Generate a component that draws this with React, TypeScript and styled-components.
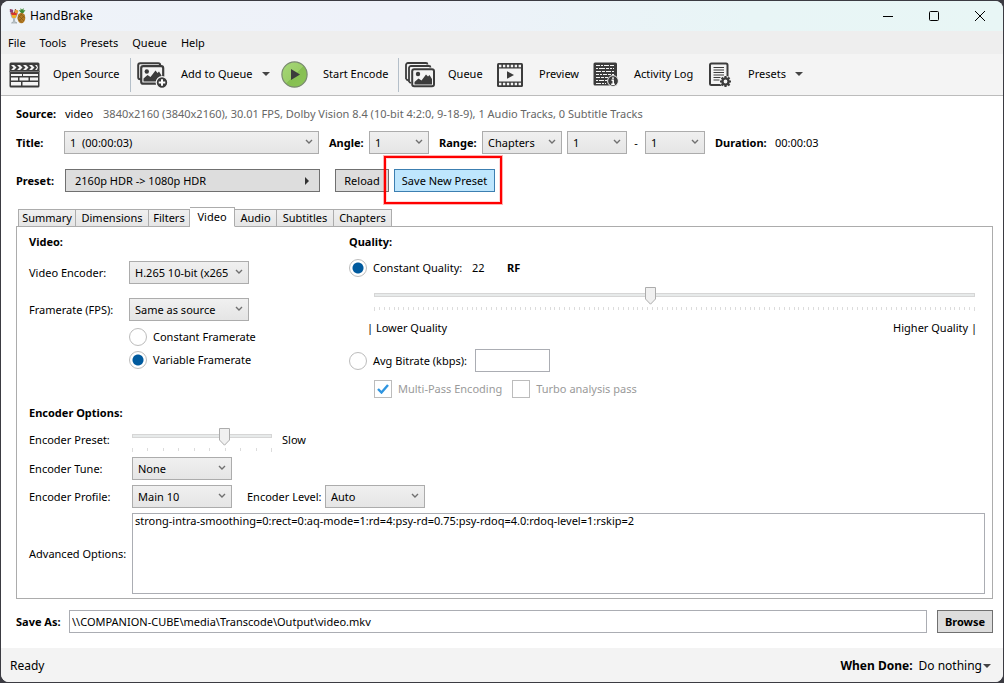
import React from "react";
import styled, { createGlobalStyle, css } from "styled-components";

const GlobalStyle = createGlobalStyle`
  *, *::before, *::after { box-sizing: border-box; }
  html, body { margin: 0; background: #3b3b42; }
  body, button, input, select, textarea {
    font-family: "Noto Sans", "Open Sans", sans-serif;
    font-size: 11px;
    line-height: 16px;
    color: #000;
  }
`;

const Window = styled.div`
  display: flex;
  flex-direction: column;
  min-height: calc(100vh - 2px);
  margin: 1px;
  border-radius: 8px;
  overflow: hidden;
  background: #fff;
`;

const TitleBar = styled.header`
  display: flex;
  align-items: center;
  height: 30px;
  padding-left: 8px;
  background: linear-gradient(90deg, #eef3f8, #eef1f9 40%, #e8f5f6 75%, #e8f6f5);
`;

const AppName = styled.h1`
  flex: 1;
  margin: 0 0 0 4px;
  font-size: 12px;
  font-weight: 400;
`;

const WindowButton = styled.button`
  display: grid;
  place-items: center;
  width: 46px;
  height: 30px;
  padding: 0;
  border: 0;
  background: none;
`;

const MenuBar = styled.nav`
  display: flex;
  align-items: center;
  gap: 14px;
  height: 23px;
  padding: 0 7px;
  background: #eee;
`;

const MenuButton = styled.button`
  padding: 0;
  border: 0;
  background: none;
`;

const Toolbar = styled.div`
  display: flex;
  align-items: center;
  height: 42px;
  padding-left: 8px;
  border-bottom: 1px solid #bcbcbc;
  background: #f4f4f4;
`;

const ToolButton = styled.button<{ $width: number; $gap: number }>`
  display: flex;
  align-items: center;
  gap: ${(p) => p.$gap}px;
  width: ${(p) => p.$width}px;
  height: 38px;
  padding: 0;
  border: 0;
  background: none;
  white-space: nowrap;
  svg { flex: none; }
`;

const ToolText = styled.span`
  display: flex;
  align-items: center;
  gap: 9px;
  padding-bottom: 2px;
`;

const Separator = styled.span`
  width: 1px;
  height: 34px;
  margin-right: 6px;
  background: #b4bfc9;
`;

const Caret = styled.span`
  border: 4px solid transparent;
  border-top-color: #444;
  border-bottom: 0;
`;

const Content = styled.main`
  display: flex;
  flex: 1;
  flex-direction: column;
  padding: 8px 10px 15px 15px;
`;

const SourceRow = styled.div`
  display: flex;
  align-items: center;
  height: 20px;
  margin-bottom: 7px;
  white-space: nowrap;
`;

const FormRow = styled.div`
  display: flex;
  align-items: center;
  margin-bottom: 15px;
`;

const Label = styled.label<{ $width?: number; $bold?: boolean }>`
  flex: none;
  width: ${(p) => (p.$width ? `${p.$width}px` : "auto")};
  font-weight: ${(p) => (p.$bold ? 700 : 400)};
  white-space: nowrap;
`;

const Muted = styled.span`
  margin-left: 10px;
  color: #666;
`;

const Dash = styled.span`
  width: 18px;
  text-align: center;
`;

const SelectFrame = styled.span<{ $width: number; $after?: number }>`
  display: grid;
  flex: none;
  align-items: center;
  width: ${(p) => p.$width}px;
  height: 23px;
  margin-right: ${(p) => p.$after ?? 0}px;
  border: 1px solid #acacac;
  background: linear-gradient(#f0f0f0, #e5e5e5);
  > * { grid-area: 1 / 1; }
  svg {
    justify-self: end;
    margin: 0 5px 2px 0;
    pointer-events: none;
  }
`;

const NativeSelect = styled.select`
  width: 100%;
  height: 21px;
  padding: 0 20px 0 5px;
  border: 0;
  appearance: none;
  background: none;
  overflow: hidden;
  text-overflow: clip;
`;

const Button = styled.button<{ $width: number; $accent?: boolean }>`
  flex: none;
  width: ${(p) => p.$width}px;
  height: 23px;
  padding: 0;
  border: 1px solid ${(p) => (p.$accent ? "#3c7fb1" : "#707070")};
  background: ${(p) => (p.$accent ? "#bee6fd" : "#ddd")};
  white-space: nowrap;
`;

const PresetButton = styled(Button)`
  display: flex;
  align-items: center;
  justify-content: space-between;
  margin-right: 15px;
  padding: 0 10px 0 9px;
`;

const Highlight = styled.span`
  position: relative;
  display: flex;
  margin-left: 5px;
  &::after {
    content: "";
    position: absolute;
    inset: -13px -7px -12px -10px;
    border: 2px solid #f00;
    box-shadow: 0 0 0 1px rgba(255, 0, 0, 0.3), inset 0 0 0 1px rgba(255, 0, 0, 0.15);
    pointer-events: none;
  }
`;

const Tabs = styled.div`
  display: flex;
  align-items: flex-end;
  height: 20px;
  margin-bottom: -1px;
  padding-left: 2px;
  z-index: 1;
`;

const Tab = styled.button<{ $width: number; $active?: boolean }>`
  width: ${(p) => p.$width}px;
  height: 18px;
  padding: 0;
  border: 1px solid #acacac;
  border-left-width: 0;
  background: linear-gradient(#f0f0f0, #e5e5e5);
  &:first-child { border-left-width: 1px; }
  ${(p) =>
    p.$active &&
    css`
      height: 20px;
      border-bottom-color: #fff;
      background: #fff;
    `}
`;

const Panel = styled.section`
  display: flex;
  flex: 1;
  flex-direction: column;
  margin-bottom: 11px;
  padding: 7px 7px 4px 12px;
  border: 1px solid #acacac;
`;

const Columns = styled.div`
  display: grid;
  grid-template-columns: 320px 1fr;
`;

const Heading = styled.h2`
  height: 16px;
  margin: 0;
  font-size: 11px;
  line-height: 16px;
`;

const Line = styled.div<{ $height: number; $top?: number; $indent?: number }>`
  display: flex;
  align-items: center;
  height: ${(p) => p.$height}px;
  margin-top: ${(p) => p.$top ?? 0}px;
  padding-left: ${(p) => p.$indent ?? 0}px;
`;

const Radio = styled.input`
  flex: none;
  width: 18px;
  height: 18px;
  margin: 0 6px 0 0;
  border: 1px solid #bcbcbc;
  border-radius: 50%;
  appearance: none;
  background: #fff;
  &:checked { background: radial-gradient(circle, #005a9e 5px, #fff 6px); }
`;

const CheckFrame = styled.span`
  display: grid;
  place-items: center;
  width: 18px;
  height: 18px;
  margin-right: 6px;
  > * { grid-area: 1 / 1; }
  svg { pointer-events: none; }
`;

const Checkbox = styled.input`
  width: 18px;
  height: 18px;
  margin: 0;
  border: 1px solid #bcbcbc;
  appearance: none;
  background: #fff;
`;

const DisabledLabel = styled(Label)`
  margin-right: 10px;
  color: #9a9a9a;
`;

const SliderFrame = styled.div<{ $width?: number }>`
  display: flex;
  flex: ${(p) => (p.$width ? "none" : "1")};
  flex-direction: column;
  width: ${(p) => (p.$width ? `${p.$width}px` : "auto")};
  margin-right: 10px;
  svg { display: block; margin-top: 4px; }
`;

const thumb = `url("data:image/svg+xml,%3Csvg xmlns='http://www.w3.org/2000/svg' width='11' height='18'%3E%3Cpath d='M.5.5h10v11.5l-5 5.2l-5-5.2z' fill='%23f0f0f0' stroke='%23acacac'/%3E%3C/svg%3E")`;

const Slider = styled.input`
  width: 100%;
  height: 16px;
  margin: 0;
  appearance: none;
  background: none;
  &::-webkit-slider-runnable-track {
    height: 4px;
    border: 1px solid #d6d6d6;
    background: #e7eaea;
  }
  &::-webkit-slider-thumb {
    width: 11px;
    height: 18px;
    margin-top: -7px;
    appearance: none;
    background: ${thumb} no-repeat;
  }
`;

const Ends = styled.div`
  display: flex;
  justify-content: space-between;
  margin: 9px 0 0 18px;
  padding-right: 8px;
`;

const TextInput = styled.input<{ $width?: number }>`
  flex: ${(p) => (p.$width ? "none" : "1")};
  width: ${(p) => (p.$width ? `${p.$width}px` : "auto")};
  min-width: 0;
  height: 23px;
  padding: 0 2px;
  border: 1px solid #abadb3;
  background: #fff;
`;

const AdvancedRow = styled.div`
  display: flex;
  flex: 1;
  align-items: center;
  margin-top: 5px;
`;

const TextArea = styled.textarea`
  flex: 1;
  align-self: stretch;
  min-width: 0;
  min-height: 60px;
  padding: 0 2px;
  border: 1px solid #abadb3;
  line-height: 14px;
  resize: none;
`;

const SaveRow = styled.div`
  display: flex;
  align-items: center;
`;

const BrowseButton = styled(Button)`
  margin-left: 10px;
  font-weight: 700;
`;

const StatusBar = styled.footer`
  display: flex;
  align-items: center;
  height: 34px;
  padding: 2px 12px 0 9px;
  background: #f3f3f3;
  font-size: 12px;
`;

const Status = styled.span`
  flex: 1;
`;

const WhenDone = styled.button`
  display: flex;
  align-items: center;
  gap: 1px;
  margin-left: 6px;
  padding: 0;
  border: 0;
  background: none;
  font-size: 12px;
`;

interface SelectProps {
  id?: string;
  label?: string;
  value: string;
  width: number;
  after?: number;
}

function Select({ id, label, value, width, after }: SelectProps) {
  return (
    <SelectFrame $width={width} $after={after}>
      <NativeSelect id={id} aria-label={label}>
        <option>{value}</option>
      </NativeSelect>
      <svg width="8" height="6" viewBox="0 0 8 6">
        <path d="M1 1l3 3l3-3" fill="none" stroke="#707070" strokeWidth="1.4" />
      </svg>
    </SelectFrame>
  );
}

function Ticks({ count, width }: { count: number; width: number }) {
  const step = (width - 1) / count;
  return (
    <svg width="100%" height="4" viewBox={`0 0 ${width} 4`} preserveAspectRatio="none" shapeRendering="crispEdges">
      {Array.from({ length: count + 1 }, (_, i) => (
        <rect key={i} x={Math.round(i * step)} width="1" height={i === 0 || i === count ? 4 : 3} fill="#dcdcdc" />
      ))}
    </svg>
  );
}

function AppIcon() {
  return (
    <svg width="17" height="16" viewBox="0 0 17 16">
      <path d="M1.500 5h7L7 9.500L5.600 10.500v3L8 15H2.500l2-1.500v-3L2.800 9.500z" fill="#c9d3d8" stroke="#8c9498" strokeWidth=".6" />
      <path d="M1.500 4.500h7L7.200 8H3z" fill="#d8352a" />
      <path d="M2.600 7h5L6.500 10h-3z" fill="#eeb02c" />
      <path d="M1 1l2.500 4M6.500 1L5.500 5" stroke="#8a4a2c" strokeWidth="1" />
      <circle cx="2.500" cy="3" r="1.800" fill="#8e3f78" />
      <circle cx="7.500" cy="3.600" r="1.800" fill="#e8a23a" />
      <path d="M12.500 5.500L9.500 2l2 .6L11.600 0l1.400 1.800L14.600 0l-.1 2.500L16.500 2l-2.500 3.500z" fill="#3f8a35" />
      <ellipse cx="12.400" cy="10" rx="3.900" ry="5.200" fill="#b27a24" />
      <path d="M9.500 7.500l5.500 5.500M9 10.500l4 4M11.500 5.800l4.200 4.200M15.500 7.500L10 13M13.200 5.600L8.800 10" stroke="#7e5213" strokeWidth=".6" />
    </svg>
  );
}

function SourceIcon() {
  return (
    <svg width="31" height="26" viewBox="0 0 31 26">
      <rect x=".5" y=".5" width="30" height="25" rx="1.500" fill="#3c3c3c" />
      <path d="M2 3h3l2.500 2.500L5 8H2l2.500-2.500zM8 3h3l2.500 2.500L11 8H8l2.500-2.500zM14 3h3l2.500 2.500L17 8h-3l2.500-2.500zM20 3h3l2.500 2.500L23 8h-3l2.500-2.500zM26 3h2l1 2.500L28 8h-2l2-2.500z" fill="#f4f4f4" />
      <path d="M0 9.500h31" stroke="#777" />
      <path d="M2 12h11v2H2zM14 12h15v2H14zM2 15.500h7v3H2zM10.500 15.500h9v3h-9zM21 15.500h8v3h-8zM2 20h10v3.500H2zM13.500 20H29v3.500H13.500z" fill="#f4f4f4" />
    </svg>
  );
}

function AddQueueIcon() {
  return (
    <svg width="31" height="26" viewBox="0 0 31 26">
      <rect x="1.200" y="1.200" width="22" height="16" rx="2" fill="none" stroke="#3c3c3c" strokeWidth="2" />
      <rect x="4.200" y="4.200" width="22" height="17.500" rx="2" fill="#f4f4f4" stroke="#3c3c3c" strokeWidth="2.200" />
      <circle cx="9.800" cy="9.500" r="2.200" fill="#3c3c3c" />
      <path d="M6.500 19.500v-3l4-3.500l3 2l5-6.500l2 2.500l1.500-1.500l2.500 4v6z" fill="#3c3c3c" />
      <circle cx="25" cy="20.500" r="5.800" fill="#3c3c3c" stroke="#f4f4f4" strokeWidth="1.200" />
      <path d="M25 17.200v6.600M21.700 20.500h6.600" stroke="#fff" strokeWidth="2" />
    </svg>
  );
}

function StartIcon() {
  return (
    <svg width="27" height="27" viewBox="0 0 27 27">
      <defs>
        <linearGradient id="green" x1="0" y1="0" x2="1" y2="1">
          <stop offset="0" stopColor="#a6d878" />
          <stop offset=".5" stopColor="#9acd68" />
          <stop offset=".52" stopColor="#86bf52" />
          <stop offset="1" stopColor="#8cc456" />
        </linearGradient>
      </defs>
      <circle cx="13.500" cy="13.500" r="12.600" fill="url(#green)" stroke="#7a8a70" strokeWidth="1.200" />
      <path d="M10 8l9 5.500l-9 5.500z" fill="#3c3c3c" />
    </svg>
  );
}

function QueueIcon() {
  return (
    <svg width="30" height="26" viewBox="0 0 30 26">
      <path d="M1 17V3a2 2 0 0 1 2-2h18a1.500 1.500 0 0 1 1.500 1.500M4 20V6a2 2 0 0 1 2-2h18a1.500 1.500 0 0 1 1.500 1.500M1 17l2 1.500M4 20l2 1" fill="none" stroke="#3c3c3c" strokeWidth="1.800" />
      <rect x="7.200" y="7.200" width="21.800" height="17" rx="2" fill="#f4f4f4" stroke="#3c3c3c" strokeWidth="2" />
      <circle cx="13" cy="12" r="2.200" fill="#3c3c3c" />
      <path d="M9.500 22.500V20l4-3.500l3 2l4.500-6l2 2l1.500-1.500l2.500 4v5.500z" fill="#3c3c3c" />
    </svg>
  );
}

function PreviewIcon() {
  return (
    <svg width="26" height="24" viewBox="0 0 26 24">
      <rect x="0" y="0" width="26" height="24" rx="1.500" fill="#3c3c3c" />
      <rect x="2" y="5.500" width="22" height="13" fill="#f4f4f4" />
      <path d="M2 3h22M2 21h22" stroke="#f4f4f4" strokeWidth="2.400" strokeDasharray="2.400 1.520" />
      <path d="M10 8.200l7 3.800l-7 3.800z" fill="#3c3c3c" />
    </svg>
  );
}

function LogIcon() {
  return (
    <svg width="26" height="25" viewBox="0 0 26 25">
      <rect x=".5" y=".5" width="23.500" height="23" rx="1.500" fill="#3c3c3c" />
      <g stroke="#f4f4f4" strokeWidth="1">
        <path d="M3 3.500h18" strokeDasharray="4 1 2 1 5 1" />
        <path d="M3 6.500h18" strokeDasharray="2 1 6 1 3 1" />
        <path d="M3 9.500h18" strokeDasharray="5 1 3 1" />
        <path d="M3 12.500h18" strokeDasharray="3 1 2 1 4 1" />
        <path d="M3 15.500h12" strokeDasharray="4 1 3 1" />
        <path d="M3 18.500h11" strokeDasharray="2 1 5 1" />
        <path d="M3 21.500h10" strokeDasharray="5 1 2 1" />
      </g>
      <circle cx="20" cy="19" r="5.400" fill="#3c3c3c" stroke="#f4f4f4" strokeWidth="1" />
      <path d="M20 15.200v1.800M18.500 18.300h1.700v3.700M18.200 22.200h3.600" stroke="#fff" strokeWidth="1.500" fill="none" />
    </svg>
  );
}

function PresetsIcon() {
  return (
    <svg width="23" height="26" viewBox="0 0 23 26">
      <rect x="1" y="1.500" width="17.500" height="21.500" rx="1.500" fill="#f4f4f4" stroke="#3c3c3c" strokeWidth="2" />
      <path d="M4.500 5.500H15M4.500 8H15M4.500 10.500H15M4.500 13H15M4.500 15.500h7M4.500 18h6" stroke="#3c3c3c" strokeWidth="1.100" />
      <circle cx="16.500" cy="19.500" r="5.800" fill="#f4f4f4" />
      <circle cx="16.500" cy="19.500" r="3.100" fill="none" stroke="#3c3c3c" strokeWidth="2.400" />
      <path d="M16.500 14v2M16.500 23v2M11 19.500h2M20 19.500h2M12.600 15.600l1.500 1.500M19 22l1.500 1.500M12.600 23.400l1.500-1.500M19 17l1.500-1.500" stroke="#3c3c3c" strokeWidth="2.200" />
    </svg>
  );
}

const menus = ["File", "Tools", "Presets", "Queue", "Help"];

const tabs: [string, number][] = [
  ["Summary", 58],
  ["Dimensions", 73],
  ["Filters", 41],
  ["Video", 45],
  ["Audio", 42],
  ["Subtitles", 57],
  ["Chapters", 58],
];

export default function App() {
  return (
    <>
      <GlobalStyle />
      <Window>
        <TitleBar>
          <AppIcon />
          <AppName>HandBrake</AppName>
          <WindowButton aria-label="Minimize">
            <svg width="10" height="10"><path d="M0 5.500h10" stroke="#000" /></svg>
          </WindowButton>
          <WindowButton aria-label="Maximize">
            <svg width="10" height="10"><rect x=".5" y=".5" width="9" height="9" rx="1" fill="none" stroke="#000" /></svg>
          </WindowButton>
          <WindowButton aria-label="Close">
            <svg width="10" height="10"><path d="M0 0l10 10M10 0L0 10" stroke="#000" /></svg>
          </WindowButton>
        </TitleBar>
        <MenuBar>
          {menus.map((m) => <MenuButton key={m}>{m}</MenuButton>)}
        </MenuBar>
        <Toolbar>
          <ToolButton $width={121} $gap={13}><SourceIcon /><ToolText>Open Source</ToolText></ToolButton>
          <Separator />
          <ToolButton $width={144} $gap={13}><AddQueueIcon /><ToolText>Add to Queue<Caret /></ToolText></ToolButton>
          <ToolButton $width={117} $gap={15}><StartIcon /><ToolText>Start Encode</ToolText></ToolButton>
          <Separator />
          <ToolButton $width={92} $gap={13}><QueueIcon /><ToolText>Queue</ToolText></ToolButton>
          <ToolButton $width={96} $gap={16}><PreviewIcon /><ToolText>Preview</ToolText></ToolButton>
          <ToolButton $width={116} $gap={15}><LogIcon /><ToolText>Activity Log</ToolText></ToolButton>
          <ToolButton $width={100} $gap={16}><PresetsIcon /><ToolText>Presets<Caret /></ToolText></ToolButton>
        </Toolbar>
        <Content>
          <SourceRow>
            <Label as="span" $bold $width={49}>Source:</Label>
            <span>video</span>
            <Muted>3840x2160 (3840x2160), 30.01 FPS, Dolby Vision 8.4 (10-bit 4:2:0, 9-18-9), 1 Audio Tracks, 0 Subtitle Tracks</Muted>
          </SourceRow>
          <FormRow>
            <Label $bold $width={48} htmlFor="title">Title:</Label>
            <Select id="title" value={"1\u00a0 (00:00:03)"} width={255} after={10} />
            <Label $bold $width={40} htmlFor="angle">Angle:</Label>
            <Select id="angle" value="1" width={60} after={10} />
            <Label $bold $width={43} htmlFor="range">Range:</Label>
            <Select id="range" value="Chapters" width={80} after={5} />
            <Select label="Range start" value="1" width={60} />
            <Dash>-</Dash>
            <Select label="Range end" value="1" width={60} after={10} />
            <Label as="span" $bold $width={60}>Duration:</Label>
            <span>00:00:03</span>
          </FormRow>
          <FormRow>
            <Label $bold $width={49} htmlFor="preset">Preset:</Label>
            <PresetButton id="preset" $width={255}>
              2160p HDR -&gt; 1080p HDR
              <svg width="4" height="8"><path d="M0 0l4 4l-4 4z" fill="#333" /></svg>
            </PresetButton>
            <Button $width={54}>Reload</Button>
            <Highlight><Button $width={101} $accent>Save New Preset</Button></Highlight>
          </FormRow>
          <Tabs role="tablist">
            {tabs.map(([name, width]) => (
              <Tab key={name} role="tab" $width={width} $active={name === "Video"} aria-selected={name === "Video"}>{name}</Tab>
            ))}
          </Tabs>
          <Panel>
            <Columns>
              <div>
                <Heading>Video:</Heading>
                <Line $height={23} $top={11}>
                  <Label $width={100} htmlFor="encoder">Video Encoder:</Label>
                  <Select id="encoder" value="H.265 10-bit (x265)" width={120} />
                </Line>
                <Line $height={23} $top={14}>
                  <Label $width={100} htmlFor="fps">Framerate (FPS):</Label>
                  <Select id="fps" value="Same as source" width={120} />
                </Line>
                <Line $height={18} $top={7} $indent={100}>
                  <Radio type="radio" name="rate" id="cfr" />
                  <Label htmlFor="cfr">Constant Framerate</Label>
                </Line>
                <Line $height={18} $top={5} $indent={100}>
                  <Radio type="radio" name="rate" id="vfr" defaultChecked />
                  <Label htmlFor="vfr">Variable Framerate</Label>
                </Line>
              </div>
              <div>
                <Heading>Quality:</Heading>
                <Line $height={18} $top={9}>
                  <Radio type="radio" name="quality" id="cq" defaultChecked />
                  <Label $width={99} htmlFor="cq">Constant Quality:</Label>
                  <Label as="span" $width={35}>22</Label>
                  <Label as="span" $bold>RF</Label>
                </Line>
                <Line $height={24} $top={10} $indent={25}>
                  <SliderFrame>
                    <Slider type="range" aria-label="Constant quality" min="0" max="1000" defaultValue="459" />
                    <Ticks count={123} width={601} />
                  </SliderFrame>
                </Line>
                <Ends><span>| Lower Quality</span><span>Higher Quality |</span></Ends>
                <Line $height={23} $top={13}>
                  <Radio type="radio" name="quality" id="abr" />
                  <Label $width={102} htmlFor="abr">Avg Bitrate (kbps):</Label>
                  <TextInput $width={75} aria-label="Average bitrate" />
                </Line>
                <Line $height={18} $top={8} $indent={25}>
                  <CheckFrame>
                    <Checkbox type="checkbox" id="multi" defaultChecked disabled />
                    <svg width="12" height="10"><path d="M1 5l3.500 3.500L11 1" fill="none" stroke="#2f95e0" strokeWidth="2.400" /></svg>
                  </CheckFrame>
                  <DisabledLabel htmlFor="multi">Multi-Pass Encoding</DisabledLabel>
                  <CheckFrame><Checkbox type="checkbox" id="turbo" disabled /></CheckFrame>
                  <DisabledLabel htmlFor="turbo">Turbo analysis pass</DisabledLabel>
                </Line>
              </div>
            </Columns>
            <Line $height={16} $top={7}><Heading>Encoder Options:</Heading></Line>
            <Line $height={24} $top={7}>
              <Label $width={103} htmlFor="speed">Encoder Preset:</Label>
              <SliderFrame $width={140}>
                <Slider type="range" id="speed" min="0" max="100" defaultValue="68" />
                <Ticks count={9} width={140} />
              </SliderFrame>
              <span>Slow</span>
            </Line>
            <Line $height={23} $top={5}>
              <Label $width={103} htmlFor="tune">Encoder Tune:</Label>
              <Select id="tune" value="None" width={100} />
            </Line>
            <Line $height={23} $top={5}>
              <Label $width={103} htmlFor="profile">Encoder Profile:</Label>
              <Select id="profile" value="Main 10" width={100} after={15} />
              <Label $width={78} htmlFor="level">Encoder Level:</Label>
              <Select id="level" value="Auto" width={100} />
            </Line>
            <AdvancedRow>
              <Label $width={103} htmlFor="advanced">Advanced Options:</Label>
              <TextArea id="advanced" spellCheck={false} defaultValue="strong-intra-smoothing=0:rect=0:aq-mode=1:rd=4:psy-rd=0.75:psy-rdoq=4.0:rdoq-level=1:rskip=2" />
            </AdvancedRow>
          </Panel>
          <SaveRow>
            <Label $bold $width={53} htmlFor="save">Save As:</Label>
            <TextInput id="save" defaultValue={"\\\\COMPANION-CUBE\\media\\Transcode\\Output\\video.mkv"} />
            <BrowseButton $width={56}>Browse</BrowseButton>
          </SaveRow>
        </Content>
        <StatusBar>
          <Status>Ready</Status>
          <Label as="span" $bold>When Done:</Label>
          <WhenDone>Do nothing<Caret /></WhenDone>
        </StatusBar>
      </Window>
    </>
  );
}
